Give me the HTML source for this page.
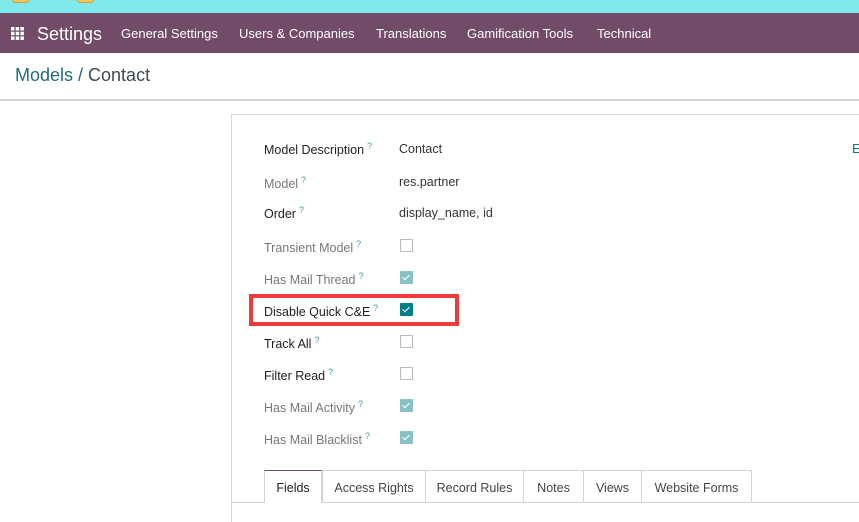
<!DOCTYPE html>
<html><head><style>
html,body{margin:0;width:859px;height:522px;overflow:hidden}
body{background:#fff;font-family:"Liberation Sans",sans-serif;position:relative}
.top{position:absolute;left:0;top:0;width:859px;height:13px;background:#7fe9ec}
.y{position:absolute;top:-4px;width:15px;height:5px;border:1px solid #c9a23a;background:#f4c45a;border-radius:3px}
.nav{position:absolute;top:13px;left:0;width:859px;height:40px;background:#714b67;color:#fff}
.nav span{position:absolute;top:13px;font-size:13px}
.bc{position:absolute;top:53px;left:0;width:859px;height:46px;background:#fff;border-bottom:2px solid #d0d2d6}
.bc div{position:absolute;left:15px;top:12px;font-size:18px;color:#1d6b7d}
.left{position:absolute;left:0;top:101px;width:231px;height:421px;background:#fff}
.sheet{position:absolute;left:231px;top:114px;width:640px;height:420px;background:#fff;border:1px solid #d8dadd}
.l{position:absolute;left:32px;font-size:12.5px;color:#1f1f1f}
.l.g{color:#777}
.l sup{color:#3b9cab;font-size:9px;margin-left:3px}
.v{position:absolute;left:167px;font-size:12.5px;color:#333}
.cb{position:absolute;left:168px;width:11px;height:11px;border:1px solid #b8bcc2;background:#fff;border-radius:1px}
.cb.on{background:#88c3c3;border-color:#88c3c3}
.cb.dk{background:#017e84;border-color:#017e84}
.cb.on:after,.cb.dk:after{content:"";position:absolute;left:3px;top:1px;width:3px;height:6px;border:solid #fff;border-width:0 1.5px 1.5px 0;transform:rotate(45deg)}
.red{position:absolute;left:249px;top:294px;width:202px;height:24px;border:4px solid #f03a3a}
.tabs{position:absolute;left:0;top:355px;width:640px;height:32px;border-bottom:1px solid #d0d2d6}
.t{position:absolute;top:0;height:32px;border:1px solid #d0d2d6;border-bottom:none;font-size:12.5px;color:#444;text-align:center;line-height:34px;box-sizing:border-box}
</style></head><body>
<div class="top"><div class="y" style="left:12px"></div><div class="y" style="left:77px"></div></div>
<div class="nav">
<svg style="position:absolute;left:11px;top:14px" width="13" height="13"><g fill="#fff"><rect x="0" y="0" width="3.5" height="3.5"/><rect x="4.7" y="0" width="3.5" height="3.5"/><rect x="9.4" y="0" width="3.5" height="3.5"/><rect x="0" y="4.7" width="3.5" height="3.5"/><rect x="4.7" y="4.7" width="3.5" height="3.5"/><rect x="9.4" y="4.7" width="3.5" height="3.5"/><rect x="0" y="9.4" width="3.5" height="3.5"/><rect x="4.7" y="9.4" width="3.5" height="3.5"/><rect x="9.4" y="9.4" width="3.5" height="3.5"/></g></svg>
<span style="left:37px;top:11px;font-size:18px">Settings</span>
<span style="left:121px">General Settings</span>
<span style="left:239px">Users &amp; Companies</span>
<span style="left:376px">Translations</span>
<span style="left:467px">Gamification Tools</span>
<span style="left:597px">Technical</span>
</div>
<div class="bc"><div>Models / <span style="color:#3b4a56">Contact</span></div></div>
<div class="left"></div>
<div class="sheet">
<div class="l" style="top:26px">Model Description<sup>?</sup></div><div class="v" style="top:27px">Contact</div>
<div style="position:absolute;left:620px;top:26px;font-size:13px;color:#017e84">E</div>
<div class="l g" style="top:60px">Model<sup>?</sup></div><div class="v" style="top:60px">res.partner</div>
<div class="l" style="top:90px">Order<sup>?</sup></div><div class="v" style="top:91px">display_name, id</div>
<div class="l g" style="top:124px">Transient Model<sup>?</sup></div><div class="cb" style="top:124px"></div>
<div class="l g" style="top:156px">Has Mail Thread<sup>?</sup></div><div class="cb on" style="top:156px"></div>
<div class="l" style="top:188px">Disable Quick C&amp;E<sup>?</sup></div><div class="cb dk" style="top:188px"></div>
<div class="l" style="top:220px">Track All<sup>?</sup></div><div class="cb" style="top:220px"></div>
<div class="l" style="top:252px">Filter Read<sup>?</sup></div><div class="cb" style="top:252px"></div>
<div class="l g" style="top:284px">Has Mail Activity<sup>?</sup></div><div class="cb on" style="top:284px"></div>
<div class="l g" style="top:316px">Has Mail Blacklist<sup>?</sup></div><div class="cb on" style="top:316px"></div>
<div class="tabs">
<div class="t" style="left:32px;width:58px;border-top:1px solid #714b67;background:#fff;height:33px;color:#222">Fields</div>
<div class="t" style="left:90px;width:104px">Access Rights</div>
<div class="t" style="left:193px;width:99px">Record Rules</div>
<div class="t" style="left:291px;width:61px">Notes</div>
<div class="t" style="left:351px;width:59px">Views</div>
<div class="t" style="left:409px;width:111px">Website Forms</div>
</div>
</div>
<div class="red"></div>
</body></html>
